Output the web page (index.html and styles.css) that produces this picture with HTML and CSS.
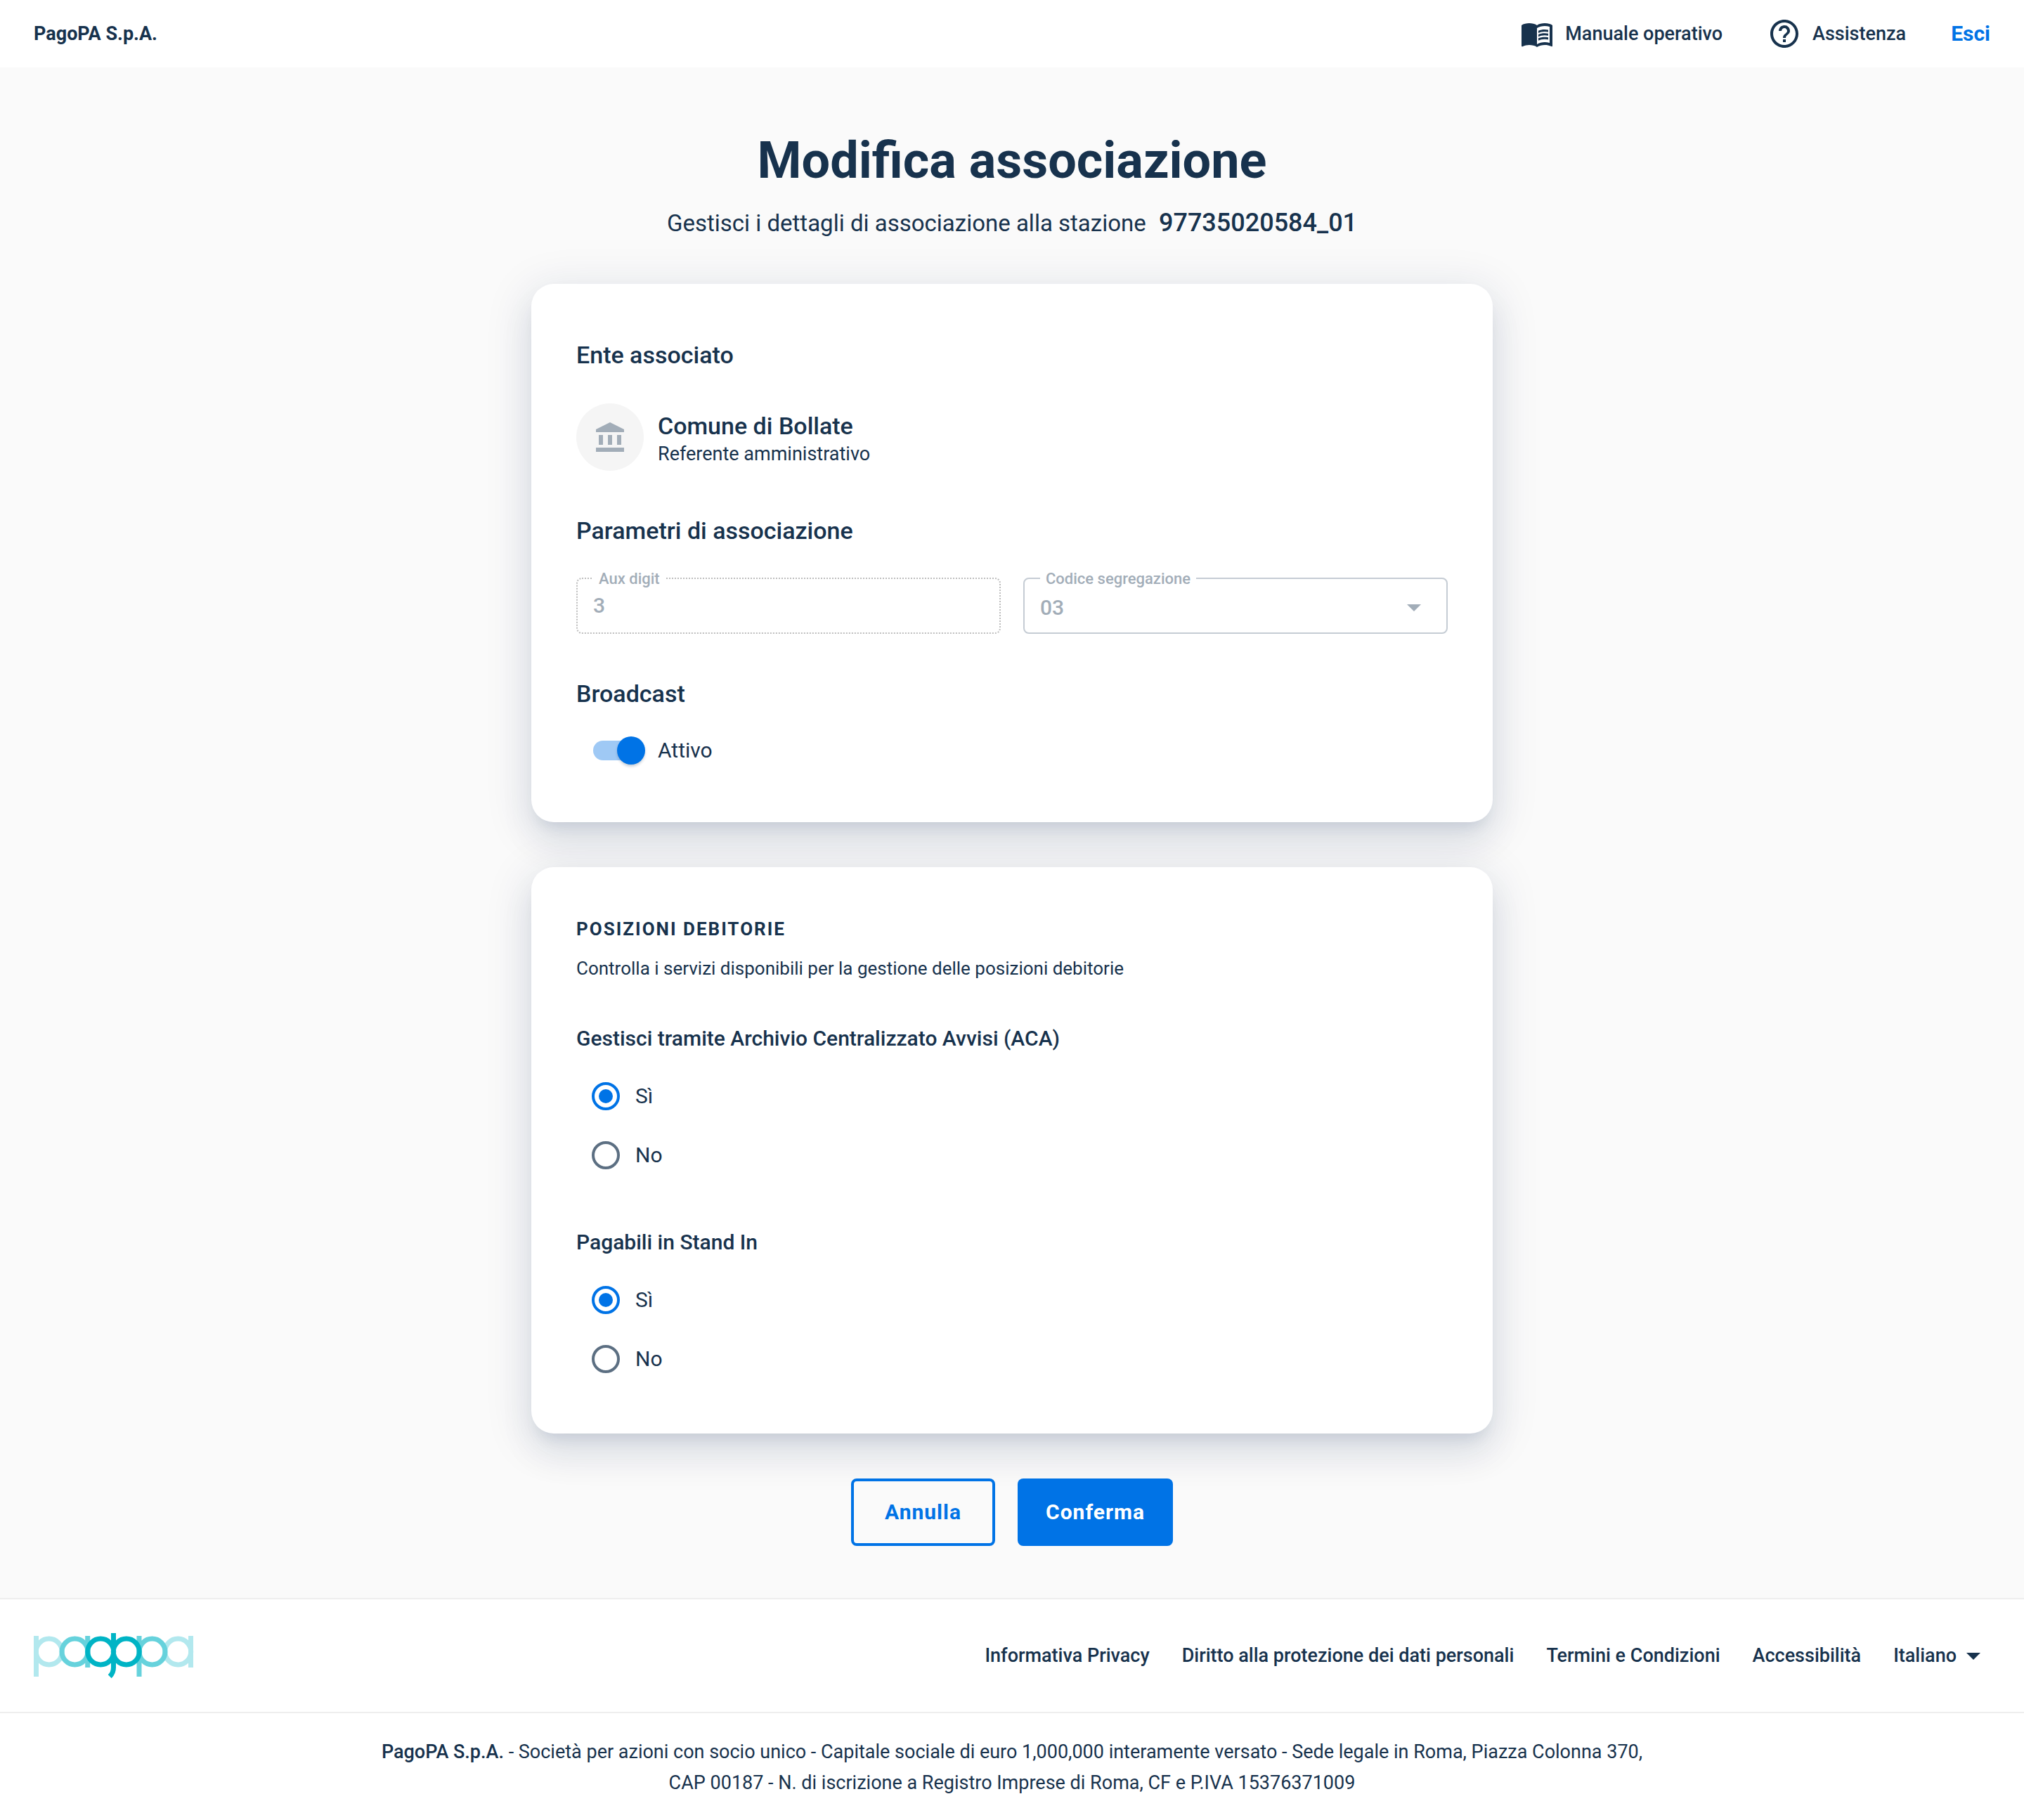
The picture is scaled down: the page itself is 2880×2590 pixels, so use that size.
FILE: index.html
```
<!DOCTYPE html>
<html lang="it">
<head>
  <meta charset="utf-8">
  <meta name="viewport" content="width=device-width, initial-scale=1">
  <title>Modifica associazione</title>
  <link rel="stylesheet" href="styles.css">
</head>
<body>
  <header class="header">
    <a class="header__company" href="#">PagoPA S.p.A.</a>
    <nav class="header__nav">
      <a class="header__link" href="#">
        <svg class="icon" viewBox="0 0 24 24" aria-hidden="true"><path d="M21 5c-1.11-.35-2.33-.5-3.5-.5-1.95 0-4.05.4-5.5 1.5-1.45-1.1-3.55-1.5-5.5-1.5S2.45 4.9 1 6v14.65c0 .25.25.5.5.5.1 0 .15-.05.25-.05C3.1 20.45 5.05 20 6.5 20c1.95 0 4.05.4 5.5 1.5 1.35-.85 3.8-1.5 5.5-1.5 1.65 0 3.35.3 4.75 1.05.1.05.15.05.25.05.25 0 .5-.25.5-.5V6c-.6-.45-1.25-.75-2-1zm0 13.5c-1.1-.35-2.3-.5-3.5-.5-1.7 0-4.15.65-5.5 1.5V8c1.35-.85 3.8-1.5 5.5-1.5 1.2 0 2.4.15 3.5.5v11.5z"/><path d="M17.5 10.5c.88 0 1.73.09 2.5.26V9.24c-.79-.15-1.64-.24-2.5-.24-1.7 0-3.24.29-4.5.83v1.66c1.13-.64 2.7-.99 4.5-.99zM13 12.49v1.66c1.13-.64 2.7-.99 4.5-.99.88 0 1.73.09 2.5.26V11.9c-.79-.15-1.64-.24-2.5-.24-1.7 0-3.24.3-4.5.83zm4.5 1.84c-1.7 0-3.24.29-4.5.83v1.66c1.13-.64 2.7-.99 4.5-.99.88 0 1.73.09 2.5.26v-1.52c-.79-.16-1.64-.24-2.5-.24z"/></svg>
        Manuale operativo
      </a>
      <a class="header__link" href="#">
        <svg class="icon" viewBox="0 0 24 24" aria-hidden="true"><path d="M11 18h2v-2h-2v2zm1-16C6.48 2 2 6.48 2 12s4.48 10 10 10 10-4.48 10-10S17.52 2 12 2zm0 18c-4.41 0-8-3.59-8-8s3.59-8 8-8 8 3.59 8 8-3.59 8-8 8zm0-14c-2.21 0-4 1.79-4 4h2c0-1.1.9-2 2-2s2 .9 2 2c0 2-3 1.75-3 5h2c0-2.25 3-2.5 3-5 0-2.21-1.79-4-4-4z"/></svg>
        Assistenza
      </a>
      <button class="header__exit" type="button">Esci</button>
    </nav>
  </header>

  <main class="main">
    <h1 class="title">Modifica associazione</h1>
    <p class="subtitle">Gestisci i dettagli di associazione alla stazione <strong class="subtitle__code">97735020584_01</strong></p>

    <form class="form">
      <section class="card">
        <h2 class="heading">Ente associato</h2>
        <div class="entity">
          <div class="entity__avatar">
            <svg class="entity__icon" viewBox="0 0 40 42" aria-hidden="true"><path d="M20 0L40 10v4H0v-4zM4 18h6v14H4zM17 18h6v14h-6zM30 18h6v14h-6zM0 36h40v6H0z"/></svg>
          </div>
          <div class="entity__text">
            <p class="entity__name">Comune di Bollate</p>
            <p class="entity__role">Referente amministrativo</p>
          </div>
        </div>

        <h2 class="heading heading--next">Parametri di associazione</h2>
        <div class="fields">
          <div class="field">
            <input class="field__control field__control--input" id="aux" type="text" value="3" disabled>
            <label class="field__label" for="aux">Aux digit</label>
          </div>
          <div class="field">
            <select class="field__control field__control--select" id="code" disabled><option>03</option></select>
            <label class="field__label" for="code">Codice segregazione</label>
            <svg class="icon field__arrow" viewBox="0 0 24 24" aria-hidden="true"><path d="M7 10l5 5 5-5z"/></svg>
          </div>
        </div>

        <h2 class="heading heading--next">Broadcast</h2>
        <label class="switch"><input class="switch__input" type="checkbox" role="switch" checked>Attivo</label>
      </section>

      <section class="card card--services">
        <h2 class="overline">Posizioni debitorie</h2>
        <p class="description">Controlla i servizi disponibili per la gestione delle posizioni debitorie</p>
        <fieldset class="choice">
          <legend class="choice__legend">Gestisci tramite Archivio Centralizzato Avvisi (ACA)</legend>
          <label class="radio"><input class="radio__input" type="radio" name="aca" checked>Sì</label>
          <label class="radio"><input class="radio__input" type="radio" name="aca">No</label>
        </fieldset>
        <fieldset class="choice">
          <legend class="choice__legend">Pagabili in Stand In</legend>
          <label class="radio"><input class="radio__input" type="radio" name="standin" checked>Sì</label>
          <label class="radio"><input class="radio__input" type="radio" name="standin">No</label>
        </fieldset>
      </section>

      <div class="actions">
        <button class="button button--outlined" type="button">Annulla</button>
        <button class="button button--filled" type="submit">Conferma</button>
      </div>
    </form>
  </main>

  <footer class="footer">
    <div class="footer__bar">
      <a class="footer__logo" href="#" aria-label="PagoPA">
        <svg class="logo" viewBox="0 0 228 65" aria-hidden="true">
          <g class="logo__outer"><path d="M3.5 4v58M223.5 4v45"/><circle cx="21.8" cy="26.5" r="18.5"/><circle cx="205.2" cy="26.5" r="18.5"/></g>
          <g class="logo__middle"><path d="M76.7 4v45M150 4v58"/><circle cx="58.5" cy="26.5" r="18.5"/><circle cx="168.5" cy="26.5" r="18.5"/></g>
          <g class="logo__inner"><circle cx="95.2" cy="26.5" r="18.5"/><circle cx="131.8" cy="26.5" r="18.5"/><path d="M113.5 0v49c0 5.500-2 9.500-5.300 12.800"/></g>
        </svg>
      </a>
      <nav class="footer__nav">
        <a class="footer__link" href="#">Informativa Privacy</a>
        <a class="footer__link" href="#">Diritto alla protezione dei dati personali</a>
        <a class="footer__link" href="#">Termini e Condizioni</a>
        <a class="footer__link" href="#">Accessibilità</a>
        <button class="footer__language" type="button" aria-haspopup="listbox">Italiano<svg class="icon" viewBox="0 0 24 24" aria-hidden="true"><path d="M7 10l5 5 5-5z"/></svg></button>
      </nav>
    </div>
    <p class="footer__legal"><strong class="footer__name">PagoPA S.p.A.</strong> - Società per azioni con socio unico - Capitale sociale di euro 1,000,000 interamente versato - Sede legale in Roma, Piazza Colonna 370,<br>CAP 00187 - N. di iscrizione a Registro Imprese di Roma, CF e P.IVA 15376371009</p>
  </footer>
</body>
</html>
```
FILE: styles.css
```
:root {
  --text: #17324d;
  --muted: #5c6f82;
  --disabled: #a2adb8;
  --primary: #0073e6;
  --line: #eeeeee;
}

*,
*::before,
*::after {
  box-sizing: border-box;
}

body {
  margin: 0;
  background: #fff;
  color: var(--text);
  font-family: Roboto, "Open Sans", sans-serif;
  font-size: 30px;
  line-height: 40px;
}

h1,
h2,
p {
  margin: 0;
}

a {
  color: inherit;
  text-decoration: none;
}

button,
input,
select {
  margin: 0;
  font: inherit;
  cursor: pointer;
}

.icon {
  display: block;
  flex: none;
  width: 48px;
  height: 48px;
  fill: currentColor;
}

/* Header */
.header {
  display: flex;
  align-items: center;
  justify-content: space-between;
  height: 96px;
  padding: 0 48px;
  font-size: 27px;
}

.header__company {
  font-weight: 700;
}

.header__nav {
  display: flex;
  align-items: center;
  gap: 64px;
}

.header__link {
  display: flex;
  align-items: center;
  gap: 16px;
  font-weight: 500;
}

.header__exit {
  padding: 0;
  border: 0;
  background: none;
  color: var(--primary);
  font-size: 30px;
  font-weight: 700;
}

/* Page */
.main {
  padding: 88px 32px 74px;
  background: #fafafa;
}

.title {
  font-size: 72px;
  font-weight: 700;
  line-height: 90px;
  text-align: center;
}

.subtitle {
  margin-top: 20px;
  font-size: 33px;
  line-height: 48px;
  text-align: center;
}

.subtitle__code {
  margin-left: 10px;
  font-size: 36px;
  font-weight: 500;
  line-height: 40px;
}

.form {
  display: flex;
  flex-direction: column;
  gap: 64px;
  max-width: 1368px;
  margin: 62px auto 0;
}

.card {
  padding: 78px 64px 82px;
  border-radius: 32px;
  background: #fff;
  box-shadow:
    0 16px 20px -10px rgba(0, 43, 85, 0.1),
    0 32px 48px 4px rgba(0, 43, 85, 0.05),
    0 12px 60px 10px rgba(0, 43, 85, 0.1);
}

.card--services {
  padding: 70px 64px 64px;
}

.heading {
  font-size: 34px;
  font-weight: 500;
  line-height: 46px;
}

.heading--next {
  margin-top: 62px;
}

/* Associated institution */
.entity {
  display: flex;
  align-items: center;
  gap: 20px;
  margin-top: 46px;
}

.entity__avatar {
  display: grid;
  place-items: center;
  width: 96px;
  height: 96px;
  border-radius: 50%;
  background: #f5f5f5;
}

.entity__icon {
  width: 40px;
  height: 42px;
  fill: var(--disabled);
}

.entity__text {
  padding-top: 4px;
}

.entity__name {
  font-size: 34px;
  font-weight: 500;
  line-height: 44px;
}

.entity__role {
  font-size: 27px;
  line-height: 36px;
}

/* Fields */
.fields {
  display: grid;
  grid-template-columns: 1fr 1fr;
  gap: 32px;
  margin-top: 44px;
}

.field {
  position: relative;
}

.field__control {
  display: block;
  appearance: none;
  width: 100%;
  height: 80px;
  padding: 0 22px;
  border: 2px solid #c5ccd4;
  border-radius: 8px;
  background: #fff;
  color: var(--disabled);
  font-weight: 500;
  opacity: 1;
}

.field__control--input {
  padding-bottom: 2px;
  border: 2px dotted #bdbdbd;
}

.field__control--select {
  padding-top: 6px;
}

.field__label {
  position: absolute;
  top: -12px;
  left: 24px;
  padding: 0 8px;
  background: #fff;
  color: var(--disabled);
  font-size: 22px;
  font-weight: 500;
  line-height: 28px;
}

.field__arrow {
  position: absolute;
  top: 18px;
  right: 24px;
  color: var(--disabled);
  pointer-events: none;
}

/* Switch */
.switch {
  display: flex;
  align-items: center;
  gap: 18px;
  width: fit-content;
  margin-top: 38px;
  padding-left: 24px;
}

.switch__input {
  display: grid;
  position: relative;
  appearance: none;
  width: 74px;
  height: 40px;
}

.switch__input::before {
  content: "";
  position: absolute;
  top: 6px;
  left: 0;
  width: 68px;
  height: 28px;
  border-radius: 14px;
  background: #c5ccd4;
}

.switch__input::after {
  content: "";
  z-index: 1;
  width: 40px;
  height: 40px;
  border-radius: 50%;
  background: #fff;
  box-shadow: 0 4px 4px -2px rgba(0, 43, 85, 0.2), 0 2px 4px rgba(0, 43, 85, 0.1);
}

.switch__input:checked::before {
  background: #9fc9f5;
}

.switch__input:checked::after {
  justify-self: end;
  background: var(--primary);
}

/* Debt positions */
.overline {
  font-size: 26px;
  font-weight: 700;
  letter-spacing: 2px;
  line-height: 36px;
  text-transform: uppercase;
}

.description {
  margin-top: 20px;
  font-size: 26px;
  line-height: 36px;
}

.choice {
  margin: 62px 0 0;
  padding: 0;
  border: 0;
}

.choice__legend {
  margin-bottom: 20px;
  padding: 0;
  font-weight: 500;
}

.radio {
  display: flex;
  align-items: center;
  gap: 22px;
  width: fit-content;
  height: 84px;
  padding-left: 22px;
}

.radio__input {
  display: grid;
  place-items: center;
  appearance: none;
  width: 40px;
  height: 40px;
  border: 4px solid var(--muted);
  border-radius: 50%;
}

.radio__input:checked {
  border-color: var(--primary);
}

.radio__input:checked::before {
  content: "";
  width: 20px;
  height: 20px;
  border-radius: 50%;
  background: var(--primary);
}

/* Actions */
.actions {
  display: flex;
  justify-content: center;
  gap: 32px;
}

.button {
  height: 96px;
  padding: 0 40px;
  border: 0;
  border-radius: 8px;
  font-weight: 700;
  letter-spacing: 1px;
}

.button--outlined {
  padding: 0 44px;
  border: 4px solid var(--primary);
  background: #fafafa;
  color: var(--primary);
}

.button--filled {
  background: var(--primary);
  color: #fff;
}

/* Footer */
.footer__bar {
  display: flex;
  align-items: center;
  justify-content: space-between;
  height: 164px;
  padding: 0 48px;
  border-top: 2px solid var(--line);
  border-bottom: 2px solid var(--line);
}

.logo {
  display: block;
  width: 228px;
  height: 65px;
  fill: none;
  stroke-width: 7px;
}

.logo__outer {
  stroke: #b2e8ee;
}

.logo__middle {
  stroke: #66d2dc;
}

.logo__inner {
  stroke: #00b4c5;
}

.footer__nav {
  display: flex;
  align-items: center;
  gap: 46px;
  font-size: 27px;
  font-weight: 500;
}

.footer__language {
  display: flex;
  align-items: center;
  padding: 0;
  border: 0;
  background: none;
  color: inherit;
}

.footer__legal {
  padding: 33px 48px 30px;
  font-size: 27px;
  line-height: 44px;
  text-align: center;
}

.footer__name {
  font-weight: 500;
}
```
